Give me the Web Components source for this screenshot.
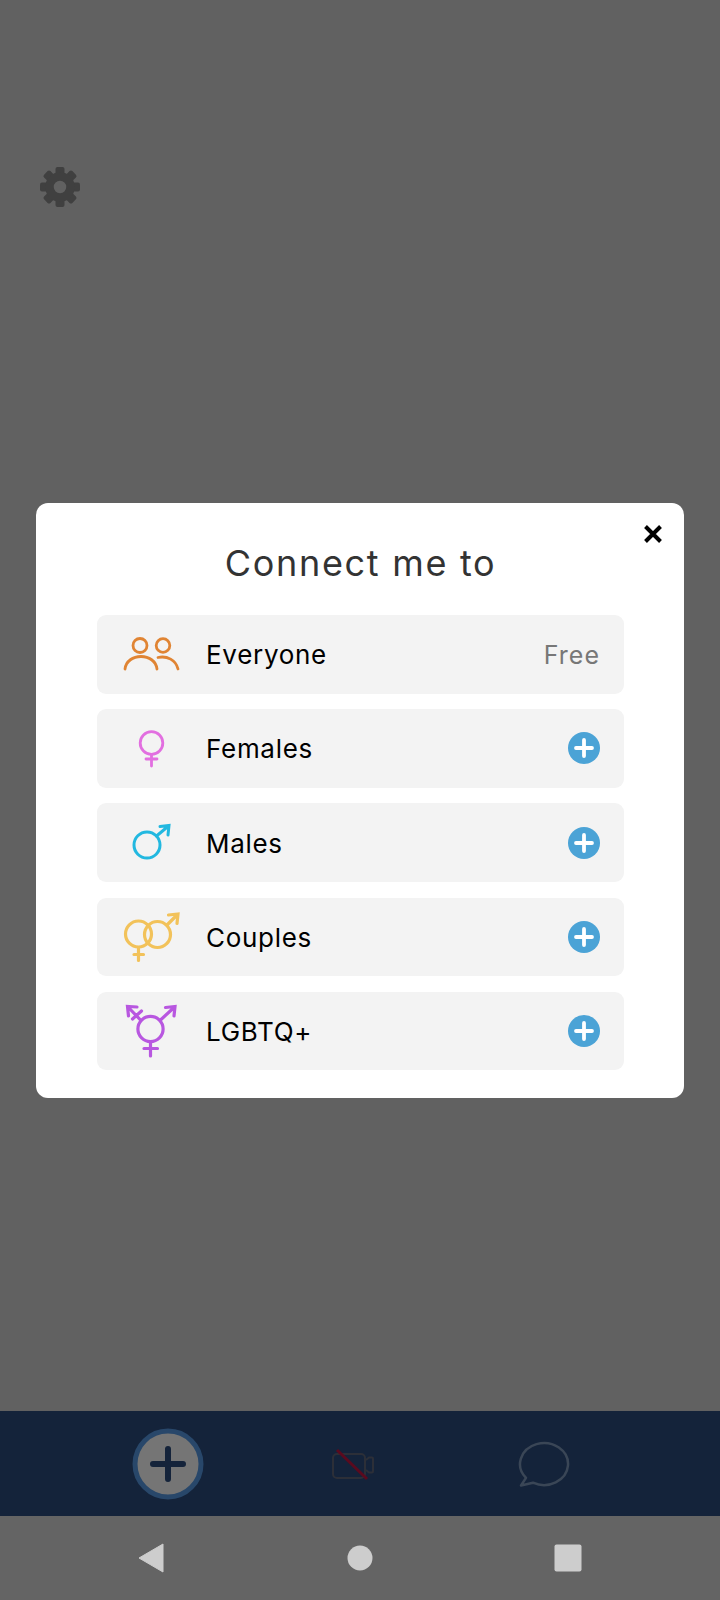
<!DOCTYPE html>
<html>
<head>
<meta charset="utf-8">
<style>
  html, body { margin: 0; height: 100%; background: #616161; }
  body { font-family: Inter, "Liberation Sans", sans-serif; }
  svg { display: block; }
</style>
</head>
<body>
<app-screen>
  <settings-gear slot="top"></settings-gear>
  <tab-bar slot="tabs"></tab-bar>
  <nav-bar slot="nav"></nav-bar>
  <connect-modal slot="overlay" heading="Connect me to">
    <connect-row label="Everyone" price="Free">
      <svg slot="icon" width="70" height="70" viewBox="0 0 70 70" fill="none" stroke="#e08433" stroke-width="2.8" stroke-linecap="round">
        <circle cx="23" cy="26.5" r="7"/><circle cx="46" cy="26.5" r="6.8"/>
        <path d="M8 50C9 42 16 37.5 24 37.5S39 42 40 50"/>
        <path d="M41 38.5C50 36.5 59 41 61 50"/>
      </svg>
    </connect-row>
    <connect-row label="Females">
      <svg slot="icon" width="70" height="70" viewBox="0 0 70 70" fill="none" stroke="#e26fe0" stroke-width="2.8" stroke-linecap="round">
        <circle cx="34.5" cy="30" r="11.3"/><path d="M34.5 41.5V53M29 46H40"/>
      </svg>
    </connect-row>
    <connect-row label="Males">
      <svg slot="icon" width="70" height="70" viewBox="0 0 70 70" fill="none" stroke="#22b8e0" stroke-width="3" stroke-linecap="round">
        <circle cx="30" cy="37" r="13"/><path d="M39.5 28L51.5 18M43 18.5L52 17.5 51 27"/>
      </svg>
    </connect-row>
    <connect-row label="Couples">
      <svg slot="icon" width="70" height="70" viewBox="0 0 70 70" fill="none" stroke="#f2c25a" stroke-width="3.2" stroke-linecap="round">
        <circle cx="21.5" cy="32" r="13"/><circle cx="40.5" cy="32.5" r="13"/>
        <path d="M50 23L60 13M51.5 13L61 12 60 21.5M21.5 45.5V58.5M17 52.5H26.5"/>
      </svg>
    </connect-row>
    <connect-row label="LGBTQ+">
      <svg slot="icon" width="70" height="70" viewBox="0 0 70 70" fill="none" stroke="#b857e0" stroke-width="3.2" stroke-linecap="round">
        <circle cx="33.5" cy="33" r="12.6"/>
        <path d="M43.5 24L57 11.5M48.5 11.5L58 10.5 57 20M23.5 24L11.5 11.5M20 11L10.5 10.5 11.5 20M24.5 15L15.5 23M33.5 46V60M27 52.5H40.5"/>
      </svg>
    </connect-row>
  </connect-modal>
</app-screen>

<script>
class AppScreen extends HTMLElement {
  constructor() {
    super();
    this.attachShadow({ mode: "open" });
    this.shadowRoot.innerHTML = `
      <style>
        :host { display: flex; flex-direction: column; width: 720px; height: 1600px; position: relative; overflow: hidden; background: #616161; }
        .main { flex: 1; padding: 167px 0 0 40px; }
        .overlay { position: absolute; inset: 0; display: flex; align-items: center; justify-content: center; }
      </style>
      <div class="main"><slot name="top"></slot></div>
      <slot name="tabs"></slot>
      <slot name="nav"></slot>
      <div class="overlay"><slot name="overlay"></slot></div>`;
  }
}

class SettingsGear extends HTMLElement {
  constructor() {
    super();
    this.attachShadow({ mode: "open" });
    let teeth = "";
    for (let a = 0; a < 360; a += 45) {
      teeth += `<rect x="-4.5" y="-20" width="9" height="9" rx="2" transform="rotate(${a})"/>`;
    }
    this.shadowRoot.innerHTML = `
      <style>:host { display: block; width: 40px; height: 40px; } svg { display: block; }</style>
      <svg width="40" height="40" viewBox="-20 -20 40 40" fill="#404040">
        ${teeth}
        <circle r="10.5" fill="none" stroke="#404040" stroke-width="8.5"/>
      </svg>`;
  }
}

class TabBar extends HTMLElement {
  constructor() {
    super();
    this.attachShadow({ mode: "open" });
    this.shadowRoot.innerHTML = `
      <style>
        :host { display: flex; height: 105px; background: #14233a; align-items: center; padding-left: 132px; }
        svg { display: block; }
        .cam { margin-left: 126px; }
        .chat { margin-left: 142px; }
      </style>
      <svg width="72" height="72" viewBox="0 0 72 72" fill="none">
        <circle cx="36" cy="36" r="33" fill="#757575" stroke="#28476a" stroke-width="5"/>
        <path d="M36 21V51M21 36H51" stroke="#14233a" stroke-width="6" stroke-linecap="round"/>
      </svg>
      <svg class="cam" width="46" height="34" viewBox="0 0 46 34" fill="none">
        <rect x="3" y="7" width="32" height="24" rx="4" stroke="#2c2f38" stroke-width="2"/>
        <path d="M36 13L39 10.5H42Q43 10.5 43 11.5V24.5Q43 25.5 42 25.5H39L36 23" stroke="#2c2f38" stroke-width="2"/>
        <path d="M7 3L37 32" stroke="#5a0a1e" stroke-width="3"/>
      </svg>
      <svg class="chat" width="52" height="48" viewBox="0 0 52 48" fill="none">
        <path d="M8 37.9A24 21 0 1 1 15 42.7L3 45.5Z" stroke="#3a4656" stroke-width="2.5" stroke-linejoin="round"/>
      </svg>`;
  }
}

class NavBar extends HTMLElement {
  constructor() {
    super();
    this.attachShadow({ mode: "open" });
    this.shadowRoot.innerHTML = `
      <style>
        :host { display: flex; height: 84px; background: #646464; align-items: center; padding-left: 138px; }
        svg { display: block; }
        .home { margin-left: 183px; }
        .recent { margin-left: 181px; }
      </style>
      <svg width="26" height="30" viewBox="0 0 26 30"><path d="M25 1V29L1 15Z" fill="#cdcdcd" stroke="#cdcdcd" stroke-linejoin="round"/></svg>
      <svg class="home" width="26" height="26" viewBox="0 0 26 26"><circle cx="13" cy="13" r="12.5" fill="#cdcdcd"/></svg>
      <svg class="recent" width="28" height="28" viewBox="0 0 28 28"><rect x="0.5" y="0.5" width="27" height="27" rx="2" fill="#cdcdcd"/></svg>`;
  }
}

const modalTemplate = document.createElement("template");
modalTemplate.innerHTML = `
  <style>
    :host { display: block; position: relative; width: 648px; height: 595px; box-sizing: border-box; padding: 0 60px 0 61px; background: #fff; border-radius: 12px; }
    h1 { margin: 0; padding-top: 36px; height: 76.5px; font-size: 36px; letter-spacing: 1.7px; line-height: 48px; font-weight: 400; color: #333; text-align: center; }
    .rows { display: flex; flex-direction: column; gap: 15.7px; }
    .close { position: absolute; top: 21px; right: 21px; }
  </style>
  <h1></h1>
  <div class="rows"><slot></slot></div>
  <svg class="close" width="20" height="20" viewBox="0 0 20 20"><path d="M2.5 2.5L17.5 17.5M17.5 2.5L2.5 17.5" stroke="#000" stroke-width="4"/></svg>`;

class ConnectModal extends HTMLElement {
  constructor() {
    super();
    this.attachShadow({ mode: "open" });
    this.shadowRoot.appendChild(modalTemplate.content.cloneNode(true));
    this.shadowRoot.querySelector("h1").textContent = this.getAttribute("heading");
  }
}

const rowTemplate = document.createElement("template");
rowTemplate.innerHTML = `
  <style>
    :host { display: flex; align-items: center; height: 78.5px; background: #f3f3f3; border-radius: 9px; padding-right: 24px; }
    .icon { width: 109px; flex: none; display: flex; justify-content: center; }
    .label { flex: 1; font-size: 26px; letter-spacing: 0.7px; color: #000; padding-top: 1px; }
    .price { font-size: 25px; letter-spacing: 1px; color: #777; padding-top: 1px; }
    svg { display: block; }
  </style>
  <div class="icon"><slot name="icon"></slot></div>
  <div class="label"></div>
  <div class="end"></div>`;

class ConnectRow extends HTMLElement {
  constructor() {
    super();
    this.attachShadow({ mode: "open" });
    this.shadowRoot.appendChild(rowTemplate.content.cloneNode(true));
    this.shadowRoot.querySelector(".label").textContent = this.getAttribute("label");
    const end = this.shadowRoot.querySelector(".end");
    const price = this.getAttribute("price");
    if (price) {
      end.innerHTML = `<div class="price">${price}</div>`;
    } else {
      end.innerHTML = `<svg width="32" height="32" viewBox="0 0 32 32"><circle cx="16" cy="16" r="16" fill="#4ba3d6"/><path d="M16 8V24M8 16H24" stroke="#fff" stroke-width="3.8" stroke-linecap="round"/></svg>`;
    }
  }
}

customElements.define("app-screen", AppScreen);
customElements.define("settings-gear", SettingsGear);
customElements.define("tab-bar", TabBar);
customElements.define("nav-bar", NavBar);
customElements.define("connect-modal", ConnectModal);
customElements.define("connect-row", ConnectRow);
</script>
</body>
</html>
